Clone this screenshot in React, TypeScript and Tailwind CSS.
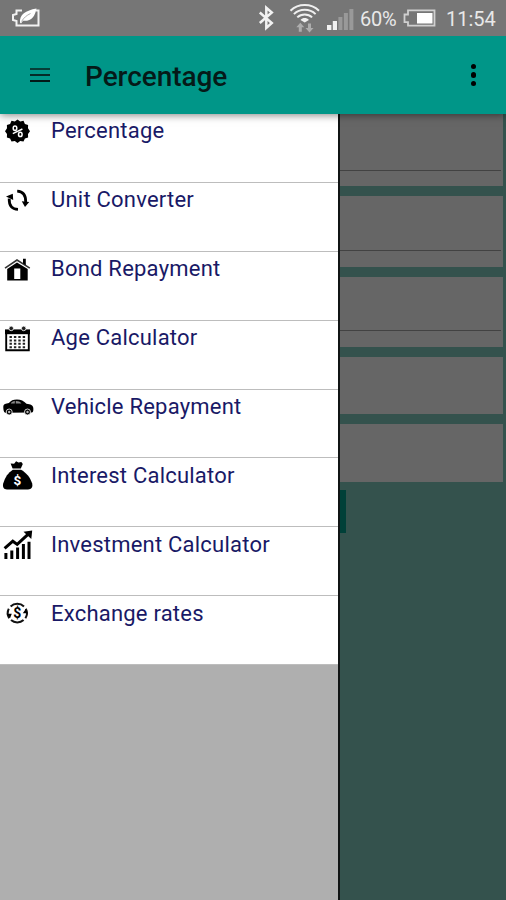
import type { ReactNode } from "react"

const PercentIcon = () => (
  <>
    <path d="M17.5 5.5l2.7 2 3.3-.7 1.4 3.1 3.2 1-.1 3.4 2 2.9-2 2.9.1 3.4-3.2 1-1.4 3.1-3.3-.7-2.7 2.1-2.7-2.1-3.3.7-1.4-3.1-3.2-1 .1-3.4-2-2.9 2-2.9-.1-3.4 3.2-1 1.4-3.1 3.3.7z" />
    <g fill="none" stroke="#fff" strokeWidth="1.5">
      <ellipse cx="15" cy="14.2" rx="1.8" ry="2.2" />
      <ellipse cx="20.3" cy="20.4" rx="1.8" ry="2.2" />
      <path d="M12.8 19.6l9.6-4.6" />
    </g>
  </>
)

const ConvertIcon = () => (
  <>
    <path d="M17.2 8.2c5 .2 8.6 3.6 8.5 10.8" fill="none" stroke="#000" strokeWidth="2.8" />
    <path d="M21.8 18.2l7.4.8-4.2 5z" />
    <path d="M18 26.4c-5.6-.2-9-3.9-8.8-10.800" fill="none" stroke="#000" strokeWidth="2.8" />
    <path d="M6 13.400l6.800-2.600.4 6.200z" />
  </>
)

const HouseIcon = () => (
  <>
    <path d="M5 16.2L17 8l12.8 8.2" fill="none" stroke="#333" strokeWidth="1.6" />
    <path d="M23 6.8h2.8v6.4L23 11.4z" />
    <path d="M7.2 17L17 10.6 27.7 17v11.4H7.2z" />
    <path d="M14.2 16.6h6.1v10.400h-6.100z" fill="#fff" />
  </>
)

const CalendarIcon = () => (
  <>
    <path d="M6.2 11v18.2h22.6V11" fill="#fff" stroke="#000" strokeWidth="1.9" />
    <path d="M5 8.4h25v4.800H5z" />
    <circle cx="11.2" cy="7.4" r="2.3" fill="#222" stroke="#fff" strokeWidth=".8" />
    <circle cx="23.7" cy="7.4" r="2.3" fill="#222" stroke="#fff" strokeWidth=".8" />
    <path
      d="M9.5 16h16M9.5 19.4h16M9.5 22.8h16M9.5 26.2h16"
      fill="none"
      stroke="#222"
      strokeWidth="2"
      strokeDasharray="2.4 2"
    />
  </>
)

const CarIcon = () => (
  <>
    <path d="M3.3 17.4c-.1-2 .5-3.2 2.4-3.7l3.2-.8c2-2.2 4.2-3.4 8-3.4 4 0 7 1.5 9.6 4.2 4 .5 6.6 1.4 6.8 4.3.2 2.4 0 4-1.3 4.6l-26.9.1c-1.4-.6-1.7-2.8-1.8-5.3z" />
    <path d="M10.8 13.4c1-1.4 2.3-2.2 4-2.3v2.5zM15.8 11.1c2.5-.1 4.2.7 5.6 2.3l-5.6.2z" fill="#888" />
    <circle cx="9.2" cy="22" r="3" stroke="#fff" strokeWidth=".8" />
    <circle cx="27.5" cy="22" r="3" stroke="#fff" strokeWidth=".8" />
    <circle cx="9.2" cy="22" r="1.2" fill="#bbb" />
    <circle cx="27.5" cy="22" r="1.2" fill="#bbb" />
  </>
)

const MoneyBagIcon = () => (
  <>
    <path d="M12.6 10.4L10.6 5.4l3.5.3 2-2.5 2.4 1.4 2.8-.6 1.5 2-2 4.4z" />
    <path d="M12.8 11.7h8.2c5 2.7 9.2 7.6 11.1 13.6 1 3.9-.8 6.1-4 6.1H7c-3.4 0-4.7-2.4-3.7-6.1C5 19.3 8.3 14.5 12.8 11.7z" />
    <text x="17.3" y="27" textAnchor="middle" fill="#fff" className="font-['Roboto'] text-[13.5px] font-bold">
      $
    </text>
  </>
)

const ChartIcon = () => (
  <>
    <path d="M4.4 26h3v6h-3zM10.3 23.4h3v8.6h-3zM16.1 20.6h3V32h-3zM21.9 17h3v15h-3zM27.5 14.8h3V32h-3z" />
    <path d="M4.6 21.4l8.2-7.2 4.4 3.2L28 7.3" fill="none" stroke="#000" strokeWidth="3" />
    <path d="M23.5 4.7l8.7-1.2-.9 8.6z" />
  </>
)

const ExchangeIcon = () => (
  <>
    <g fill="none" stroke="#111" strokeWidth="2">
      <path d="M10.6 10.5a9.5 9.5 0 0 1 13.4 0" />
      <path d="M9.2 22.2a9.4 9.4 0 0 1-.4-9.4" />
      <path d="M25.8 12.8a9.4 9.4 0 0 1-.4 9.4" />
      <path d="M23.6 24a9.5 9.5 0 0 1-12.6 0" />
    </g>
    <path d="M7 17.8h4.8L10 22.2zM22.8 17.2l2.8-4 2.4 4z" />
    <text x="17.3" y="22" textAnchor="middle" className="font-['Roboto'] text-[14px] font-bold">
      $
    </text>
  </>
)

const items: { label: string; icon: ReactNode }[] = [
  { label: "Percentage", icon: <PercentIcon /> },
  { label: "Unit Converter", icon: <ConvertIcon /> },
  { label: "Bond Repayment", icon: <HouseIcon /> },
  { label: "Age Calculator", icon: <CalendarIcon /> },
  { label: "Vehicle Repayment", icon: <CarIcon /> },
  { label: "Interest Calculator", icon: <MoneyBagIcon /> },
  { label: "Investment Calculator", icon: <ChartIcon /> },
  { label: "Exchange rates", icon: <ExchangeIcon /> },
]

function StatusBar() {
  return (
    <div className="relative z-20 flex h-[36px] items-center bg-[#767676] text-[#e8e8e8]">
      {/* power saver */}
      <svg className="ml-3 h-[20px] w-[28px]" viewBox="0 0 28 20">
        <path d="M10 2.4H4.5V6L1 7v5l3.5 1v4.500h22V2.500H24" fill="none" stroke="#f2f2f2" strokeWidth="2" />
        <path d="M8 14.5C7.4 6.4 13.5 2.5 24.5.5 23 8.5 19.5 13.5 11 12.8l-2 2.6z" fill="#fff" />
        <path d="M9.5 13.5c2.5-4 5-6 9-8" fill="none" stroke="#999" strokeWidth=".8" />
      </svg>
      <svg className="ml-[218px] h-[26px] w-[16px]" viewBox="0 0 16 26">
        <path d="M1.8 7.5l12 10.500L8.300 23V2.800l5.500 4.700-12 10.500" fill="none" stroke="#f2f2f2" strokeWidth="2.5" />
      </svg>
      <svg className="ml-[15px] h-[32px] w-[32px]" viewBox="0 0 32 32">
        <g fill="none" stroke="#f0f0f0" strokeWidth="2">
          <path d="M1.5 8.8c8-7.6 20.5-7.6 28.5 0" />
          <path d="M4.9 12.1c6-5.7 15.7-5.7 21.7 0" />
          <path d="M8.3 15.4c4-4 10.8-4 14.8 0" />
        </g>
        <path d="M11.5 18c2.3-2.6 6.1-2.6 8.4 0l-4.2 2.6z" fill="#f0f0f0" />
        <path d="M11.3 20.8l4 4.4h-2.5v4.500H9.800v-4.500H7.300z" fill="#adadad" />
        <path d="M20.5 30.4l4-4.4H22v-4.500h-3v4.500h-2.500z" fill="#adadad" />
      </svg>
      <svg className="ml-[5px] h-[24px] w-[28px]" viewBox="0 0 28 24">
        <path d="M1 19h4.4v5H1zM6.8 15H11v9H6.8z" fill="#f2f2f2" />
        <path d="M12.4 11h4v13h-4zM17.9 7h4v17h-4zM23.4 3h4v21h-4z" fill="#999" />
      </svg>
      <span className="ml-[6px] mt-[2px] w-[42px] whitespace-nowrap text-[20px] leading-none tracking-[-0.2px]">60%</span>
      <svg className="h-[20px] w-[34px]" viewBox="0 0 34 20">
        <path d="M6 2.3h26.500v15.400H6v-3.500H2.500V6.500H6z" fill="none" stroke="#d0d0d0" strokeWidth="1.8" />
        <path d="M15 5h15.5v10.500H15z" fill="#fff" />
      </svg>
      <span className="ml-[10px] mt-[2px] whitespace-nowrap text-[20px] leading-none">11:54</span>
    </div>
  )
}

function Toolbar() {
  return (
    <header className="relative z-10 flex h-[78px] items-center bg-[#009688] shadow-[0_1px_8px_rgba(0,0,0,0.5)]">
      <div className="ml-[30px] flex w-[20px] flex-col gap-[4px]">
        <div className="h-[2px] bg-[#063d38]" />
        <div className="h-[2px] bg-[#052a27]" />
        <div className="h-[2px] bg-[#021a18]" />
      </div>
      <h1 className="ml-[35px] mt-[4px] whitespace-nowrap text-[28px] font-medium leading-none tracking-[-0.05px] text-[#051a18]">
        Percentage
      </h1>
      <div className="ml-auto mr-[30px] flex flex-col gap-[3px]">
        <div className="size-[5.5px] rounded-full bg-black" />
        <div className="size-[5.5px] rounded-full bg-black" />
        <div className="size-[5.5px] rounded-full bg-black" />
      </div>
    </header>
  )
}

function Drawer() {
  return (
    <nav className="w-[340px] border-r-2 border-[#101414] bg-[#afafaf]">
      <ul>
        {items.map((item) => (
          <li key={item.label} className="flex h-[68.9px] border-b-[1.5px] border-[#bdbdbd] bg-white">
            <svg className="h-[34px] w-[34px] shrink-0" viewBox="0 0 34 34">
              {item.icon}
            </svg>
            <span className="ml-[17px] mt-[3.4px] whitespace-nowrap text-[22px] leading-[28px] tracking-[0.22px] text-[#191966]">
              {item.label}
            </span>
          </li>
        ))}
      </ul>
    </nav>
  )
}

function Form() {
  return (
    <main className="flex flex-1 flex-col gap-[10px] bg-[#34524d] pr-[3px]">
      <div className="flex h-[72px] flex-col justify-end bg-[#666] pb-[15px] pr-[2px]">
        <div className="h-px bg-[#424242]" />
      </div>
      <div className="flex h-[70.5px] flex-col justify-end bg-[#666] pb-[16px] pr-[2px]">
        <div className="h-px bg-[#424242]" />
      </div>
      <div className="flex h-[70px] flex-col justify-end bg-[#666] pb-[16px] pr-[2px]">
        <div className="h-px bg-[#424242]" />
      </div>
      <div className="h-[57px] bg-[#666]" />
      <div className="h-[58px] bg-[#666]" />
      <div className="-mt-[2px] h-[43px] w-[6px] bg-[#004038]" />
    </main>
  )
}

export default function App() {
  return (
    <div className="flex h-[900px] w-[506px] flex-col overflow-hidden font-['Roboto',sans-serif]">
      <StatusBar />
      <Toolbar />
      <div className="flex flex-1">
        <Drawer />
        <Form />
      </div>
    </div>
  )
}
